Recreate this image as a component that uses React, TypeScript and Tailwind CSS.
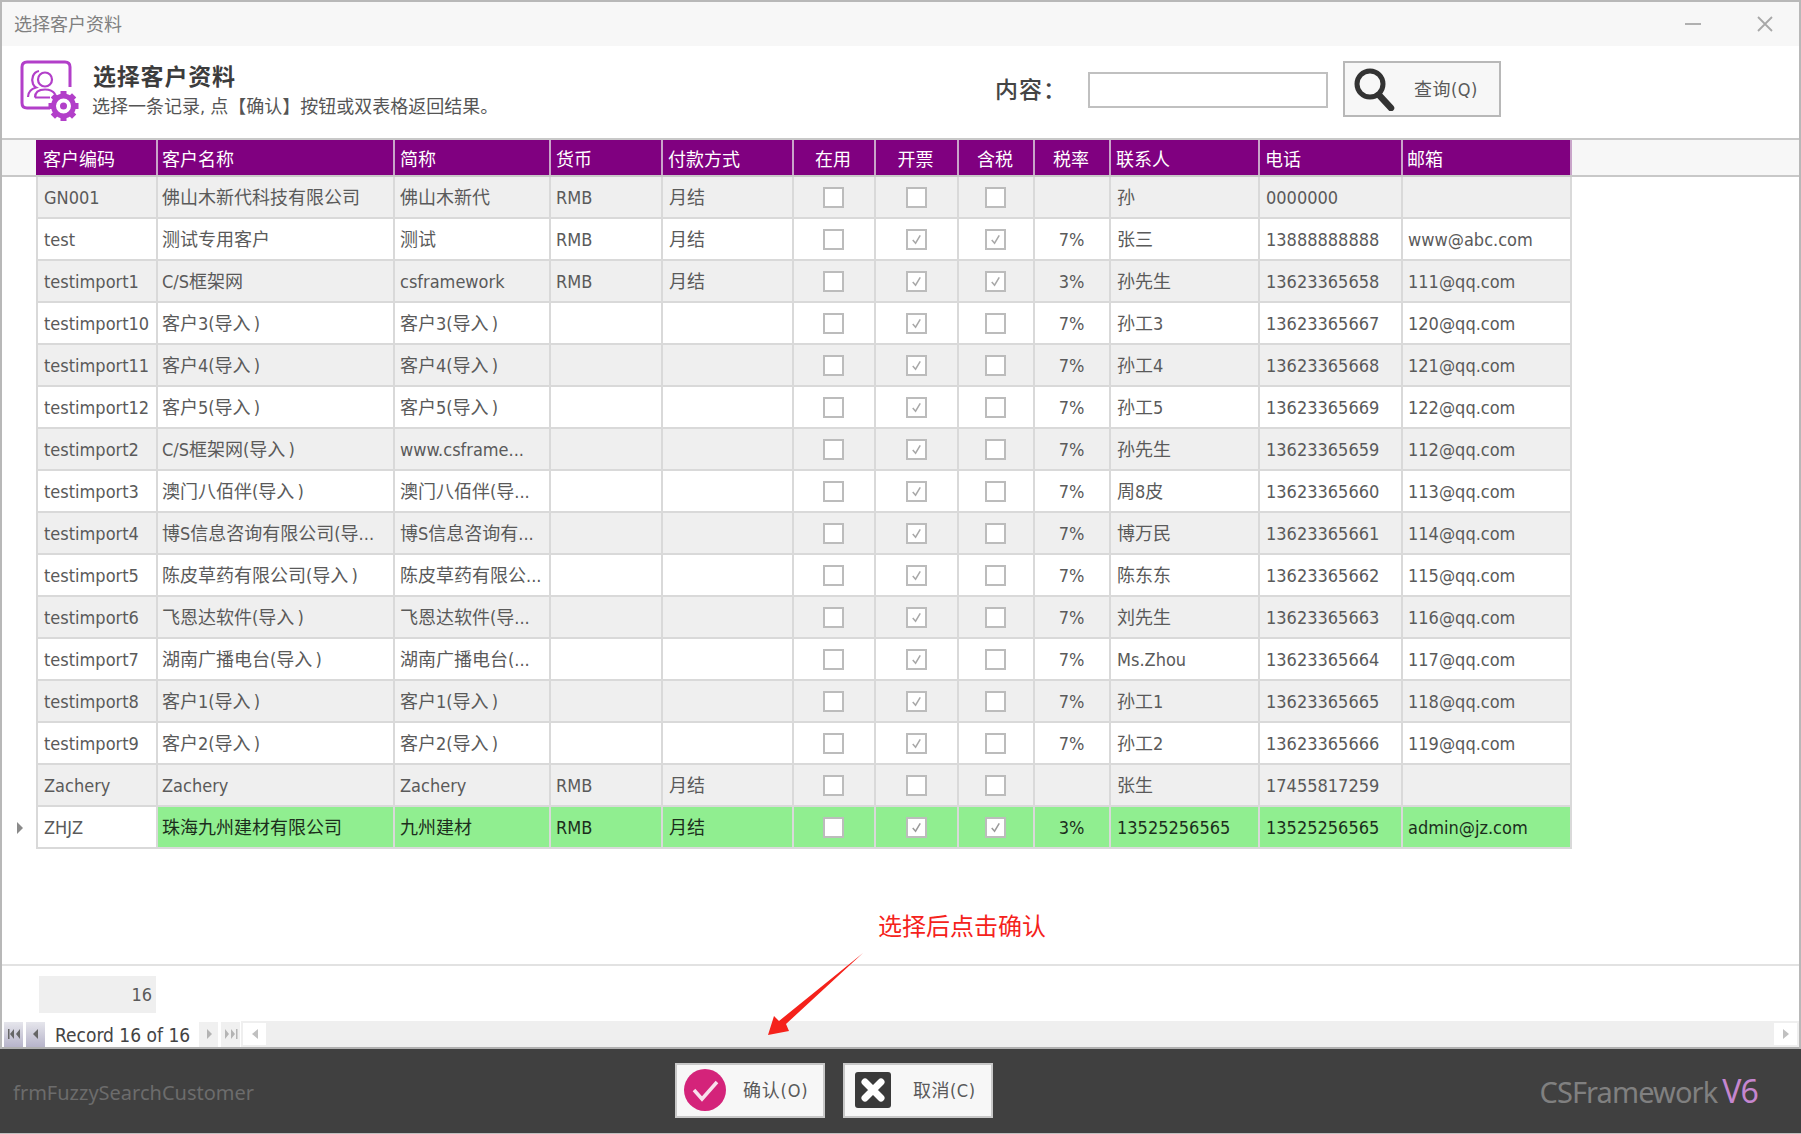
import React from 'react'

const rows = [
  ['GN001', '佛山木新代科技有限公司', '佛山木新代', 'RMB', '月结', 0, 0, 0, '', '孙', '0000000', ''],
  ['test', '测试专用客户', '测试', 'RMB', '月结', 0, 1, 1, '7%', '张三', '13888888888', 'www@abc.com'],
  ['testimport1', 'C/S框架网', 'csframework', 'RMB', '月结', 0, 1, 1, '3%', '孙先生', '13623365658', '111@qq.com'],
  ['testimport10', '客户3(导入\u2009)', '客户3(导入\u2009)', '', '', 0, 1, 0, '7%', '孙工3', '13623365667', '120@qq.com'],
  ['testimport11', '客户4(导入\u2009)', '客户4(导入\u2009)', '', '', 0, 1, 0, '7%', '孙工4', '13623365668', '121@qq.com'],
  ['testimport12', '客户5(导入\u2009)', '客户5(导入\u2009)', '', '', 0, 1, 0, '7%', '孙工5', '13623365669', '122@qq.com'],
  ['testimport2', 'C/S框架网(导入\u2009)', 'www.csframe...', '', '', 0, 1, 0, '7%', '孙先生', '13623365659', '112@qq.com'],
  ['testimport3', '澳门八佰伴(导入\u2009)', '澳门八佰伴(导...', '', '', 0, 1, 0, '7%', '周8皮', '13623365660', '113@qq.com'],
  ['testimport4', '博S信息咨询有限公司(导...', '博S信息咨询有...', '', '', 0, 1, 0, '7%', '博万民', '13623365661', '114@qq.com'],
  ['testimport5', '陈皮草药有限公司(导入\u2009)', '陈皮草药有限公...', '', '', 0, 1, 0, '7%', '陈东东', '13623365662', '115@qq.com'],
  ['testimport6', '飞恩达软件(导入\u2009)', '飞恩达软件(导...', '', '', 0, 1, 0, '7%', '刘先生', '13623365663', '116@qq.com'],
  ['testimport7', '湖南广播电台(导入\u2009)', '湖南广播电台(...', '', '', 0, 1, 0, '7%', 'Ms.Zhou', '13623365664', '117@qq.com'],
  ['testimport8', '客户1(导入\u2009)', '客户1(导入\u2009)', '', '', 0, 1, 0, '7%', '孙工1', '13623365665', '118@qq.com'],
  ['testimport9', '客户2(导入\u2009)', '客户2(导入\u2009)', '', '', 0, 1, 0, '7%', '孙工2', '13623365666', '119@qq.com'],
  ['Zachery', 'Zachery', 'Zachery', 'RMB', '月结', 0, 0, 0, '', '张生', '17455817259', ''],
  ['ZHJZ', '珠海九州建材有限公司', '九州建材', 'RMB', '月结', 0, 1, 1, '3%', '13525256565', '13525256565', 'admin@jz.com'],
] as (string | number)[][]

const headers = ['客户编码', '客户名称', '简称', '货币', '付款方式', '在用', '开票', '含税', '税率', '联系人', '电话', '邮箱']
const gridCols = 'grid grid-cols-[120px_237px_156px_112px_131px_82px_83px_76px_76px_149px_143px_169px]'
const cellPad = ['pl-[6px]', 'pl-[4px]', 'pl-[5px]', 'pl-[5px]', 'pl-[6px]', '', '', '', 'justify-center pr-[1px]', 'pl-[6px]', 'pl-[6px]', 'pl-[5px]']

function CheckCell({ checked, selected }: { checked: boolean; selected: boolean }) {
  return (
    <div className="flex h-full items-center justify-center border-r-2 border-[#d9d9d9] pr-[1px]">
      <span className="flex h-[21px] w-[21px] items-center justify-center border-2 border-[#bcbcbc] bg-white">
        {checked && (
          <svg viewBox="0 0 16 16" className="h-[15px] w-[15px]" fill="none" stroke={selected ? '#9a9a9a' : '#a8a8a8'} strokeWidth="1.6">
            <path d="M4 8.5 L7 12 L12 3.5" />
          </svg>
        )}
      </span>
    </div>
  )
}

function Row({ row, index }: { row: (string | number)[]; index: number }) {
  const selected = index === 15
  const bg = selected ? 'bg-[#90ee90] text-[#1c2e1c]' : index % 2 === 0 ? 'bg-[#efefef] text-[#5a5a5a]' : 'bg-white text-[#5a5a5a]'
  return (
    <div className="flex h-[42px]">
      <div className="flex w-[34px] items-center justify-center pl-[2px]">
        {selected && <span className="h-0 w-0 border-y-[6px] border-l-[6px] border-y-transparent border-l-[#8a8a8a]" />}
      </div>
      <div className={`${gridCols} border-b-2 border-l-2 border-[#d9d9d9] ${bg}`}>
        {row.map((v, i) => {
          if (i >= 5 && i <= 7) return <CheckCell key={i} checked={v === 1} selected={selected} />
          const first = i === 0 && selected
          return (
            <div
              key={i}
              className={`flex h-full items-center overflow-hidden whitespace-nowrap border-r-2 border-[#d9d9d9] ${cellPad[i]} ${first ? 'bg-white text-[#5a5a5a]' : ''}`}
            >
              {v}
            </div>
          )
        })}
      </div>
    </div>
  )
}

function HeaderIcon() {
  const teeth = [0, 45, 90, 135, 180, 225, 270, 315]
  return (
    <svg viewBox="0 0 62 64" className="h-[64px] w-[62px]" fill="none" stroke="#b23fc9">
      <path d="M30 48 H7 Q2 48 2 43 V7 Q2 2 7 2 H45 Q50 2 50 7 V27" strokeWidth="3" />
      <circle cx="25" cy="19.5" r="7" strokeWidth="2.2" />
      <path d="M19 11 C13 12 11 19 13 24 C14 26 15 27 16 27.5 C11 29 8 32 8 37" strokeWidth="2.2" />
      <path d="M15 37.5 C15 32 19 29.5 25 29.5 C30 29.5 33 31 35 34 M15 37.5 H30" strokeWidth="2.2" />
      {teeth.map((t) => (
        <rect key={t} x="40.5" y="31" width="6" height="7" fill="#b23fc9" stroke="none" transform={`rotate(${t} 43.5 46)`} />
      ))}
      <circle cx="43.5" cy="46" r="10" strokeWidth="5" fill="white" />
      <circle cx="43.5" cy="46" r="3.5" fill="#b23fc9" stroke="none" />
    </svg>
  )
}

function PagerButton({ path, dark }: { path: string; dark?: boolean }) {
  return (
    <span className={`flex h-[25px] w-[19px] items-center justify-center ${dark ? 'bg-gradient-to-b from-[#e6e6ec] to-[#b7b4ca]' : 'bg-[#f0f0f0]'}`}>
      <svg viewBox="0 0 14 12" className="h-[12px] w-[14px]" fill={dark ? '#666' : '#b4b4b4'}>
        <path d={path} />
      </svg>
    </span>
  )
}

export default function App() {
  return (
    <div className="relative flex h-[1134px] w-[1801px] flex-col overflow-hidden bg-white font-['DejaVu_Sans_Condensed','Noto_Sans_CJK_SC',sans-serif] text-[18px] text-[#5a5a5a]">
      {/* Title bar */}
      <div className="flex h-[46px] flex-none items-center justify-between border-l-2 border-r-2 border-t-2 border-[#b8b8b8] bg-[#f7f7f7] pl-[12px] pr-[26px] text-[#808080]">
        <span className="pt-[1px]">选择客户资料</span>
        <div className="flex items-center gap-[56px]">
          <span className="h-[2px] w-[16px] bg-[#b0b0b0]" />
          <svg viewBox="0 0 16 16" className="h-[16px] w-[16px]" stroke="#a8a8a8" strokeWidth="1.8">
            <path d="M1 1 L15 15 M15 1 L1 15" />
          </svg>
        </div>
      </div>

      {/* Search header */}
      <div className="flex h-[92px] flex-none items-center border-l-2 border-r-2 border-[#b8b8b8] pl-[18px]">
        <HeaderIcon />
        <div className="ml-[10px] flex flex-col">
          <span className="pl-[1px] text-[23px] font-bold leading-[30px] tracking-[0.8px] text-[#3c3c3c]">选择客户资料</span>
          <span className="leading-[30px] text-[#555]">选择一条记录, 点【确认】按钮或双表格返回结果。</span>
        </div>
        <div className="mb-[6px] ml-auto mr-[298px] flex items-center">
          <span className="pt-[3px] text-[23px] font-medium tracking-[1px] text-[#444]">内容：</span>
          <div className="ml-[21px] mt-[2px] h-[36px] w-[240px] border-2 border-[#c0c0c0] bg-white" />
          <button className="ml-[15px] flex h-[56px] w-[158px] items-center border-2 border-[#b8b8b8] bg-[#f7f7f7] pl-[8px]">
            <svg viewBox="0 0 42 44" className="h-[44px] w-[42px]" fill="none" stroke="#333">
              <circle cx="17" cy="17" r="13" strokeWidth="5" />
              <path d="M26 28 L38 41" strokeWidth="6.5" strokeLinecap="round" />
            </svg>
            <span className="ml-[19px] tracking-[0.5px] text-[#5a5a5a]">查询(Q)</span>
          </button>
        </div>
      </div>

      {/* Grid */}
      <div className="flex min-h-0 flex-1 flex-col border-l-2 border-r-2 border-[#b8b8b8]">
        <div className="flex h-[39px] flex-none border-b-2 border-t-2 border-[#c8c8c8] bg-[#f7f7f7]">
          <div className="w-[34px]" />
          <div className={`${gridCols} bg-[#800080] pl-[2px] text-white`}>
            {headers.map((h, i) => (
              <div
                key={h}
                className={`flex h-full items-center border-r-2 border-[#c9a4c9] pt-[3px] ${i >= 5 && i <= 8 ? 'justify-center pr-[2px]' : i === 1 || i === 11 ? 'pl-[4px]' : 'pl-[5px]'} ${i === 11 ? 'border-r-0' : ''}`}
              >
                {h}
              </div>
            ))}
          </div>
        </div>
        <div className="flex flex-1 flex-col">
          {rows.map((r, i) => (
            <Row key={i} row={r} index={i} />
          ))}
        </div>

        {/* Footer summary */}
        <div className="h-[57px] flex-none border-t-2 border-[#e2e2e2] pl-[37px] pt-[10px]">
          <div className="flex h-[37px] w-[117px] items-center justify-end bg-[#efefef] pr-[4px]">16</div>
        </div>

        {/* Pager */}
        <div className="flex h-[28px] flex-none items-center border-b-2 border-[#b0b0b0]">
          <div className="flex items-center gap-[3px] pl-[2px]">
            <PagerButton dark path="M1 1 V11 H2.5 V1 Z M7 1 L3 6 L7 11 Z M13 1 L9 6 L13 11 Z" />
            <PagerButton dark path="M9 1 L4 6 L9 11 Z" />
          </div>
          <span className="ml-[10px] w-[144px] whitespace-nowrap pt-[2px] text-[19px] text-[#444]">Record 16 of 16</span>
          <div className="flex items-center gap-[3px]">
            <PagerButton path="M5 1 L10 6 L5 11 Z" />
            <PagerButton path="M1 1 L5 6 L1 11 Z M7 1 L11 6 L7 11 Z M12 1 H13.5 V11 H12 Z" />
          </div>
          <div className="ml-[1px] flex h-full flex-1 items-center justify-between bg-[#efefef] px-[2px]">
            <span className="flex h-[22px] w-[23px] items-center justify-center bg-white">
              <span className="h-0 w-0 border-y-[5px] border-r-[6px] border-y-transparent border-r-[#c0c0c0]" />
            </span>
            <span className="flex h-[22px] w-[23px] items-center justify-center bg-white">
              <span className="h-0 w-0 border-y-[5px] border-l-[6px] border-y-transparent border-l-[#c0c0c0]" />
            </span>
          </div>
        </div>
      </div>

      {/* Dark bar */}
      <div className="relative flex h-[85px] flex-none items-center border-b border-[#c0c0c0] bg-[#404040] pb-[2px] pl-[13px] pr-[43px]">
        <span className="mt-[5px] w-[662px] whitespace-nowrap font-['Noto_Sans'] text-[20px] text-[#6c6c6c]">frmFuzzySearchCustomer</span>
        <button className="flex h-[55px] w-[150px] items-center border-2 border-[#c8c8c8] bg-[#f7f7f7] pl-[7px]">
          <svg viewBox="0 0 42 42" className="h-[42px] w-[42px]">
            <circle cx="21" cy="21" r="21" fill="#d4237a" />
            <path d="M10 21 L18 30 L33 13" fill="none" stroke="#f8e0ec" strokeWidth="3.5" />
          </svg>
          <span className="ml-[17px] tracking-[0.8px] text-[#5a5a5a]">确认(O)</span>
        </button>
        <button className="ml-[18px] flex h-[55px] w-[150px] items-center border-2 border-[#c8c8c8] bg-[#f7f7f7] pl-[10px]">
          <svg viewBox="0 0 36 36" className="h-[36px] w-[36px]">
            <rect width="36" height="36" rx="3" fill="#3a3a3a" />
            <path d="M10 10 L26 26 M26 10 L10 26" stroke="white" strokeWidth="7" strokeLinecap="round" />
          </svg>
          <span className="ml-[22px] tracking-[0.5px] text-[#5a5a5a]">取消(C)</span>
        </button>
        <span className="ml-auto mt-[1px] flex items-baseline whitespace-nowrap font-['Noto_Sans'] text-[29px] tracking-[-0.9px] text-[#808080]">
          CSFramework<span className="ml-[5px] text-[32px] text-[#c586cf]">V6</span>
        </span>
      </div>

      {/* Annotation */}
      <span className="absolute left-[878px] top-[910px] whitespace-nowrap text-[24px] leading-[34px] text-[#f5221b]">选择后点击确认</span>
      <svg viewBox="0 0 100 86" className="absolute left-[766px] top-[952px] h-[86px] w-[100px]" fill="#f5221b">
        <path d="M97 1 L20 72 L23 79 L2 83 L8 64 L13 69 Z" />
      </svg>
    </div>
  )
}
